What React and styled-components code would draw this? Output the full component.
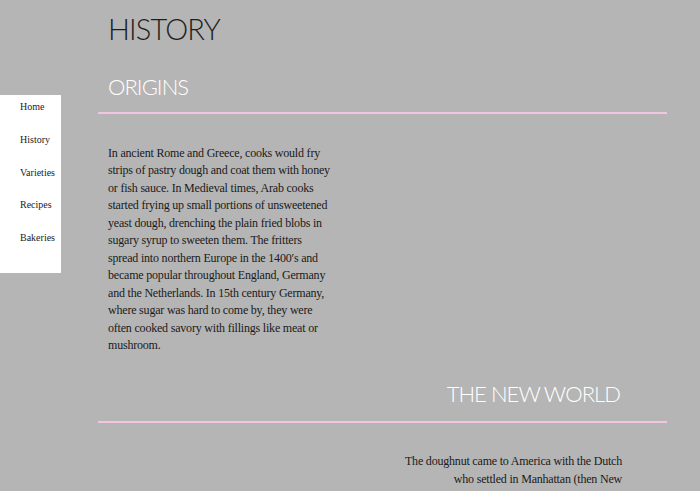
import React from "react";
import styled, { createGlobalStyle } from "styled-components";

const Global = createGlobalStyle`
  html, body { margin: 0; padding: 0; background: #b5b5b5; }
  body { font-family: "Liberation Serif", Georgia, serif; overflow: hidden; }
`;

const Page = styled.div`
  display: flex;
  align-items: flex-start;
  min-height: 491px;
`;

const Sidebar = styled.nav`
  width: 61px;
  flex-shrink: 0;
  margin-top: 95px;
  background: #ffffff;
  display: flex;
  flex-direction: column;
  padding: 6px 0 8px 20px;
  box-sizing: border-box;
  height: 178px;
`;

const NavLink = styled.a`
  display: block;
  font-family: "Liberation Serif", serif;
  font-size: 10px;
  line-height: 12px;
  color: #222;
  text-decoration: none;
  height: 33.3px;
`;

const Main = styled.main`
  margin-left: 37px;
  width: 569px;
`;

const Title = styled.h1`
  margin: 0;
  padding: 11px 10px 0;
  font-family: Lato, "Open Sans", sans-serif;
  font-weight: 300;
  font-size: 29px;
  letter-spacing: -0.85px;
  line-height: 36px;
  color: #1e1e1e;
`;

const SectionHead = styled.h2`
  margin: 0;
  font-family: Lato, "Open Sans", sans-serif;
  font-weight: 300;
  font-size: 22px;
  letter-spacing: -0.95px;
  line-height: 28px;
  color: #ffffff;
  text-align: ${(p) => (p.$right ? "right" : "left")};
  padding: ${(p) => (p.$right ? "0 47px 0 0" : "0 0 0 10px")};
  margin-top: ${(p) => p.$top}px;
`;

const Rule = styled.hr`
  border: none;
  height: 2px;
  background: #f0c4e2;
  margin: ${(p) => p.$gap}px 0 0;
`;

const Para = styled.p`
  margin: ${(p) => p.$top}px 0 0;
  width: 224px;
  font-family: "Liberation Serif", Georgia, serif;
  font-size: 12px;
  letter-spacing: -0.2px;
  line-height: 17.45px;
  color: #1a1a1a;
  text-align: ${(p) => (p.$right ? "right" : "left")};
  margin-left: ${(p) => (p.$right ? "auto" : "10px")};
  margin-right: ${(p) => (p.$right ? "45px" : "0")};
`;

export default function App() {
  const links = ["Home", "History", "Varieties", "Recipes", "Bakeries"];
  return (
    <>
      <Global />
      <Page>
        <Sidebar>
          {links.map((l) => (
            <NavLink key={l} href="#">{l}</NavLink>
          ))}
        </Sidebar>
        <Main>
          <Title>HISTORY</Title>
          <SectionHead $top={26}>ORIGINS</SectionHead>
          <Rule $gap={11} />
          <Para $top={31}>
            In ancient Rome and Greece, cooks would fry strips of pastry dough and coat them with honey or fish sauce. In Medieval times, Arab cooks started frying up small portions of unsweetened yeast dough, drenching the plain fried blobs in sugary syrup to sweeten them. The fritters spread into northern Europe in the 1400′s and became popular throughout England, Germany and the Netherlands. In 15th century Germany, where sugar was hard to come by, they were often cooked savory with fillings like meat or mushroom.
          </Para>
          <SectionHead $right $top={26}>THE NEW WORLD</SectionHead>
          <Rule $gap={13} />
          <Para $right $top={30}>
            The doughnut came to America with the Dutch who settled in Manhattan (then New Amsterdam). They called them olykoeks, or oily cakes, and they quickly spread throughout the colonies.
          </Para>
        </Main>
      </Page>
    </>
  );
}
